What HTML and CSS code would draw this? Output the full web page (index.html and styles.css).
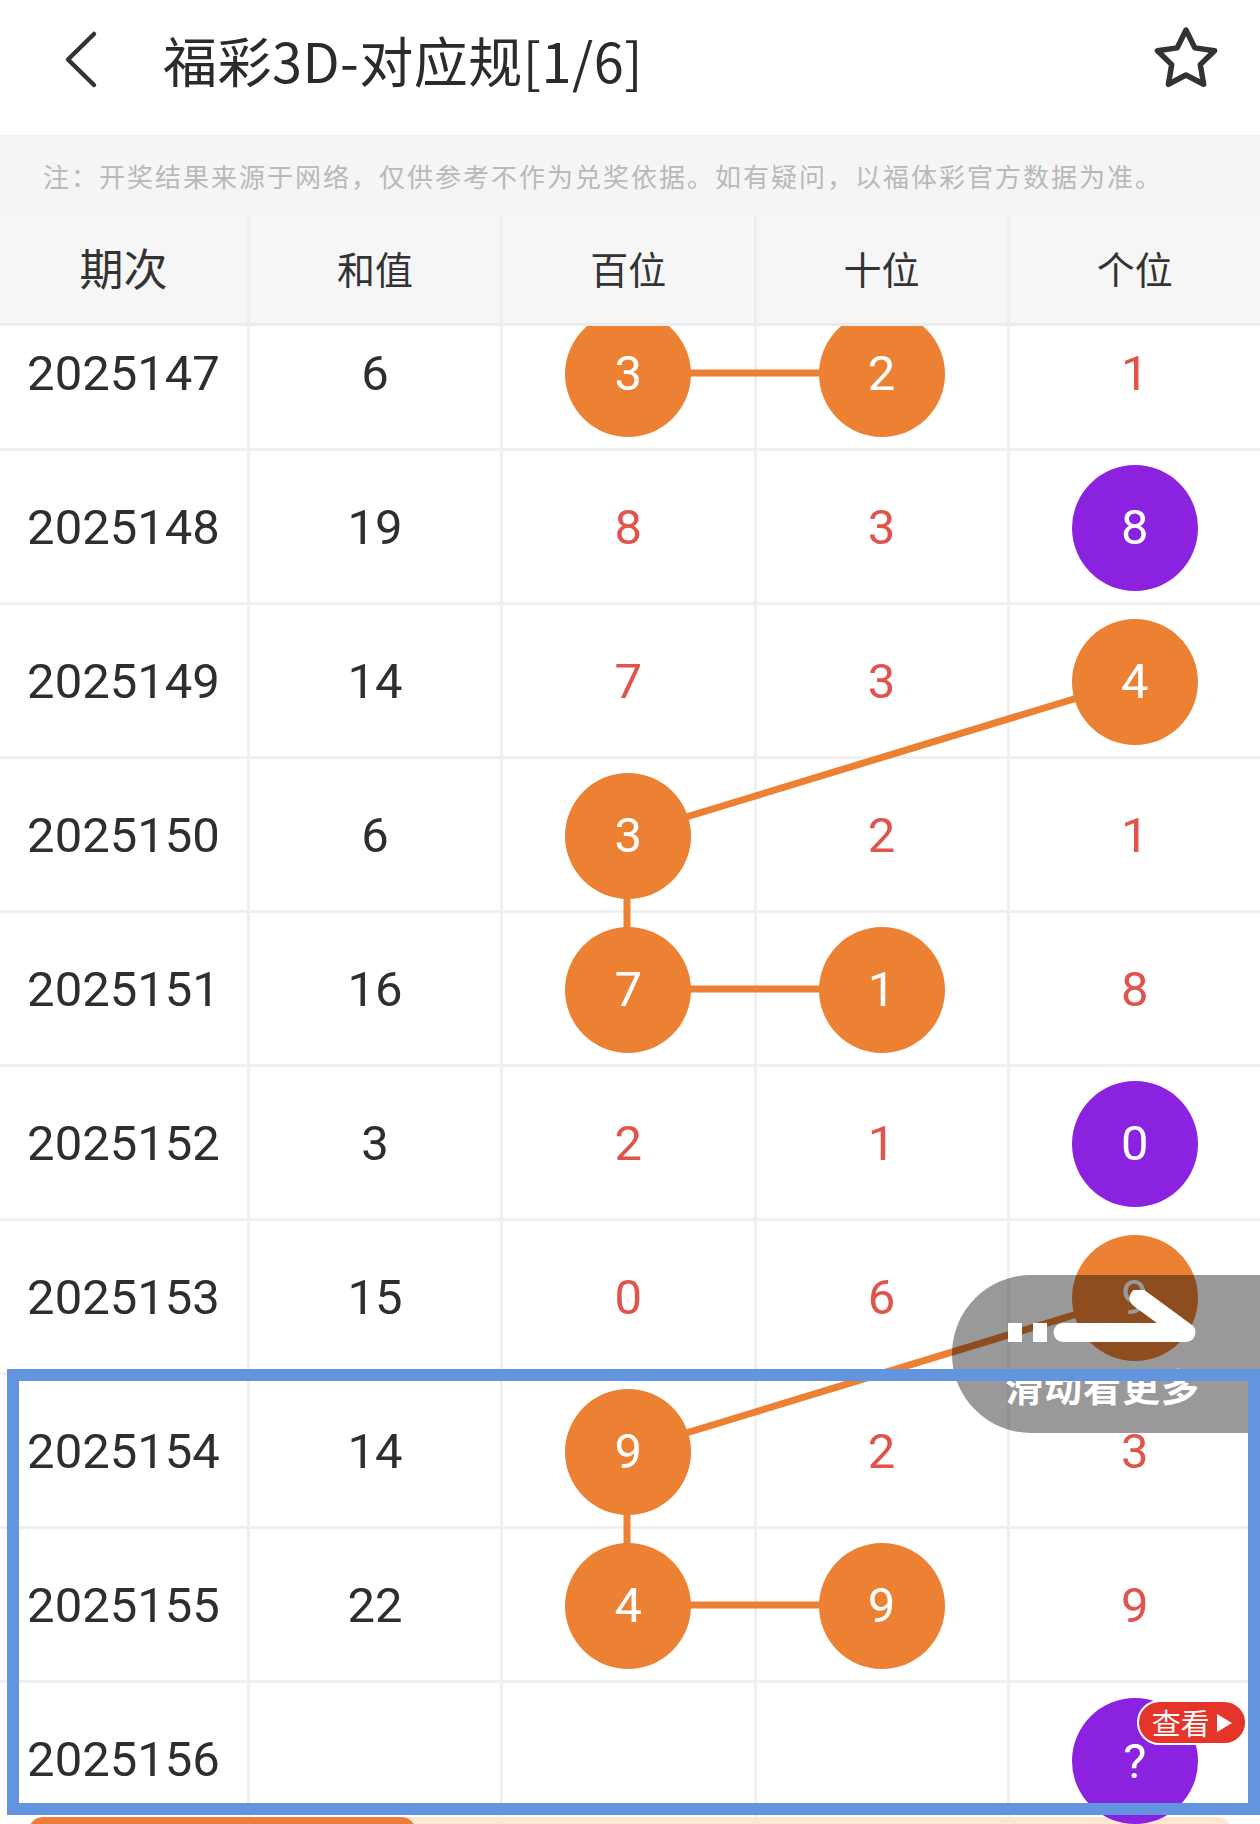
FILE: index.html
```html
<!DOCTYPE html>
<html lang="zh-CN">
<head>
<meta charset="utf-8">
<title>福彩3D-对应规</title>
<link rel="stylesheet" href="styles.css">
</head>
<body>
<div class="app">
  <header class="topbar">
    <svg class="back" width="40" height="60" viewBox="0 0 40 60"><path d="M34 4 L8 29.5 L34 55" fill="none" stroke="#333" stroke-width="4.5" stroke-linecap="round" stroke-linejoin="round"/></svg>
    <h1 class="title">福彩3D-对应规[1/6]</h1>
    <svg class="star" width="80" height="80" viewBox="-40 -40 80 80"><path d="M0,-30 L8.82,-12.14 L28.53,-9.27 L14.27,4.64 L17.63,24.27 L0,15 L-17.63,24.27 L-14.27,4.64 L-28.53,-9.27 L-8.82,-12.14 Z" fill="none" stroke="#333" stroke-width="5.5" stroke-linejoin="round"/></svg>
  </header>
  <div class="notice">注：开奖结果来源于网络，仅供参考不作为兑奖依据。如有疑问，以福体彩官方数据为准。</div>
  <div class="thead">
    <div class="th th-period">期次</div>
    <div class="th">和值</div>
    <div class="th">百位</div>
    <div class="th">十位</div>
    <div class="th">个位</div>
  </div>
  <div class="tbody">
    <div class="rows">
      <svg class="links" width="1260" height="1540" viewBox="0 0 1260 1540">
        <g stroke="#ec8033" stroke-width="7" fill="none" stroke-linecap="round">
          <line x1="627" y1="76" x2="880" y2="76"/>
          <line x1="1133" y1="384" x2="627" y2="538"/>
          <line x1="627" y1="538" x2="627" y2="692"/>
          <line x1="627" y1="692" x2="880" y2="692"/>
          <line x1="1133" y1="1000" x2="627" y2="1154"/>
          <line x1="627" y1="1154" x2="627" y2="1308"/>
          <line x1="627" y1="1308" x2="880" y2="1308"/>
        </g>
      </svg>
      <div class="row"><div class="td period">2025147</div><div class="td">6</div><div class="td"><span class="ball orange">3</span></div><div class="td"><span class="ball orange">2</span></div><div class="td red">1</div></div>
      <div class="row"><div class="td period">2025148</div><div class="td">19</div><div class="td red">8</div><div class="td red">3</div><div class="td"><span class="ball purple">8</span></div></div>
      <div class="row"><div class="td period">2025149</div><div class="td">14</div><div class="td red">7</div><div class="td red">3</div><div class="td"><span class="ball orange">4</span></div></div>
      <div class="row"><div class="td period">2025150</div><div class="td">6</div><div class="td"><span class="ball orange">3</span></div><div class="td red">2</div><div class="td red">1</div></div>
      <div class="row"><div class="td period">2025151</div><div class="td">16</div><div class="td"><span class="ball orange">7</span></div><div class="td"><span class="ball orange">1</span></div><div class="td red">8</div></div>
      <div class="row"><div class="td period">2025152</div><div class="td">3</div><div class="td red">2</div><div class="td red">1</div><div class="td"><span class="ball purple">0</span></div></div>
      <div class="row"><div class="td period">2025153</div><div class="td">15</div><div class="td red">0</div><div class="td red">6</div><div class="td"><span class="ball orange">9</span></div></div>
      <div class="row"><div class="td period">2025154</div><div class="td">14</div><div class="td"><span class="ball orange">9</span></div><div class="td red">2</div><div class="td red">3</div></div>
      <div class="row"><div class="td period">2025155</div><div class="td">22</div><div class="td"><span class="ball orange">4</span></div><div class="td"><span class="ball orange">9</span></div><div class="td red">9</div></div>
      <div class="row"><div class="td period">2025156</div><div class="td"></div><div class="td"></div><div class="td"></div><div class="td last"><span class="ball purple q">?</span><span class="badge">查看<svg width="18" height="20" viewBox="0 0 18 20"><path d="M2 1 L17 10 L2 19 Z" fill="#fff"/></svg></span></div></div>
    </div>
  </div>

  <div class="swipe">
    <svg class="swipe-icon" width="200" height="60" viewBox="0 0 200 60">
      <rect x="3" y="33" width="14" height="19" fill="#fff"/>
      <rect x="28" y="33" width="14" height="19" fill="#fff"/>
      <path d="M58 42.5 L181 42.5 L134 8" fill="none" stroke="#fff" stroke-width="19" stroke-linecap="round" stroke-linejoin="round"/>
    </svg>
    <div class="swipe-text">滑动看更多</div>
  </div>

  <div class="highlight"></div>
  <div class="bottom-bar"><div class="bottom-fill"></div></div>
</div>
</body>
</html>
```
FILE: styles.css
```css
* { box-sizing: border-box; }
html, body { margin: 0; padding: 0; background: #fff; }
.app {
  position: relative;
  width: 1260px;
  height: 1824px;
  overflow: hidden;
  font-family: Roboto, "Noto Sans CJK SC", sans-serif;
  color: #333;
}
.topbar {
  height: 135px;
  display: flex;
  align-items: center;
  padding-bottom: 16px;
  background: #fff;
}
.back { margin-left: 60px; flex: none; }
.title {
  margin: 0 0 0 63px;
  font-family: "Noto Sans CJK SC", sans-serif;
  font-weight: 400;
  font-size: 54px;
  color: #2b2b2b;
  letter-spacing: 0.5px;
}
.star { margin-left: auto; margin-right: 34px; flex: none; }

.notice {
  height: 80px;
  background: #f5f5f5;
  padding-left: 43px;
  display: flex;
  align-items: center;
  font-family: "Noto Sans CJK SC", sans-serif;
  font-size: 26px;
  letter-spacing: 2px;
  color: #b9b9b9;
}
.thead {
  height: 111px;
  display: grid;
  grid-template-columns: 247px repeat(4, 1fr);
  background: #f6f6f6;
  border-bottom: 3px solid #ececec;
}
.th {
  display: flex;
  align-items: center;
  justify-content: center;
  border-left: 3px solid #efefef;
  font-family: "Noto Sans CJK SC", sans-serif;
  font-size: 38px;
  color: #333;
  padding-bottom: 4px;
}
.th-period { border-left: none; font-size: 44px; }

.tbody {
  position: relative;
  height: 1498px;
  overflow: hidden;
  background: #fff;
}
.rows { position: relative; margin-top: -29px; }
.links { position: absolute; left: 0; top: 0; z-index: 1; }
.row {
  height: 154px;
  display: grid;
  grid-template-columns: 247px repeat(4, 1fr);
  border-bottom: 3px solid #f0f0f0;
}
.td {
  position: relative;
  display: flex;
  align-items: center;
  justify-content: center;
  border-left: 3px solid #f0f0f0;
  font-size: 49px;
  font-weight: 400;
  padding-top: 2px;
  color: #2e2e2e;
}
.td.period { border-left: none; }
.td.red { color: #e0544b; }
.ball {
  position: relative;
  z-index: 2;
  width: 126px;
  height: 126px;
  border-radius: 50%;
  display: flex;
  align-items: center;
  justify-content: center;
  color: #fff;
  font-size: 49px;
  font-weight: 400;
}
.ball.orange { background: #ec8033; }
.ball.purple { background: #8a22e0; }
.ball.q { margin-top: 3px; }
.badge {
  position: absolute;
  z-index: 3;
  left: 127px;
  top: 17px;
  height: 45px;
  padding: 0 12px 0 13px;
  display: flex;
  align-items: center;
  gap: 5px;
  background: #e5352a;
  border: 2px solid #fff;
  border-radius: 23px;
  color: #fff;
  font-family: "Noto Sans CJK SC", sans-serif;
  font-size: 29px;
  line-height: 1;
}

.swipe {
  position: absolute;
  z-index: 5;
  left: 952px;
  top: 1275px;
  width: 320px;
  height: 158px;
  border-radius: 79px 0 0 79px;
  background: rgba(0, 0, 0, 0.4);
  display: flex;
  flex-direction: column;
  align-items: flex-start;
  padding: 15px 0 0 53px;
}
.swipe-icon { display: block; }
.swipe-text {
  margin-top: 13px;
  font-family: "Noto Sans CJK SC", sans-serif;
  font-weight: 700;
  font-size: 38px;
  line-height: 44px;
  letter-spacing: 1px;
  color: #fff;
}

.highlight {
  position: absolute;
  z-index: 6;
  left: 7px;
  top: 1369px;
  width: 1253px;
  height: 446px;
  border: 12px solid #6394e0;
}
.bottom-bar {
  position: absolute;
  left: 28px;
  right: 28px;
  top: 1817px;
  height: 30px;
  border-radius: 15px;
  background: #fde6d2;
  overflow: hidden;
}
.bottom-fill {
  width: 388px;
  height: 100%;
  border-radius: 15px;
  background: #ee7d3b;
}
```
